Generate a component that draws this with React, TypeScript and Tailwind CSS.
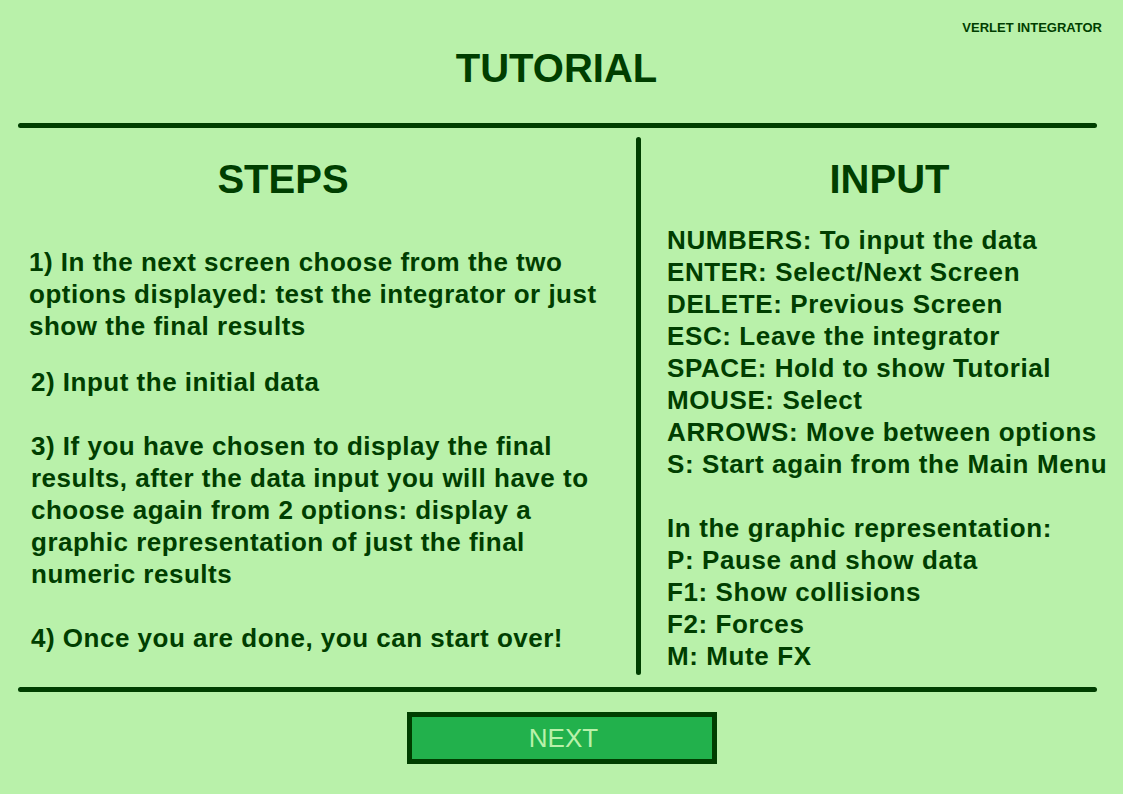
import React from 'react';

const steps: string[][] = [
  ['1) In the next screen choose from the two', 'options displayed: test the integrator or just', 'show the final results'],
  ['2) Input the initial data'],
  [
    '3) If you have chosen to display the final',
    'results, after the data input you will have to',
    'choose again from 2 options: display a',
    'graphic representation of just the final',
    'numeric results',
  ],
  ['4) Once you are done, you can start over!'],
];

const keys: string[] = [
  'NUMBERS: To input the data',
  'ENTER: Select/Next Screen',
  'DELETE: Previous Screen',
  'ESC: Leave the integrator',
  'SPACE: Hold to show Tutorial',
  'MOUSE: Select',
  'ARROWS: Move between options',
  'S: Start again from the Main Menu',
  '',
  'In the graphic representation:',
  'P: Pause and show data',
  'F1: Show collisions',
  'F2: Forces',
  'M: Mute FX',
];

const Rule = () => <div className="mx-[18px] mr-[26px] h-[5px] rounded-full bg-[#003e00]" />;

export default function App() {
  return (
    <div className="h-[794px] w-full overflow-hidden bg-[#b9f1aa] font-['Liberation_Sans',Arial,sans-serif] text-[#003e00]">
      <header>
        <div className="pr-[21px] pt-[21px] text-right text-[13px] font-bold leading-none">VERLET INTEGRATOR</div>
        <h1 className="mt-[14px] pr-[10px] text-center text-[40px] font-bold leading-none">TUTORIAL</h1>
      </header>

      <div className="mt-[35px]">
        <Rule />
      </div>

      <main className="flex h-[559px]">
        <section className="w-[618px] ml-[18px] pt-[31px]">
          <h2 className="pr-[88px] text-center text-[40px] font-bold leading-none">STEPS</h2>
          <div className="mt-[47px] pl-[11px] text-[26px] font-bold leading-[32px] tracking-[0.5px] whitespace-nowrap">
            {steps.map((para, i) => (
              <p key={i} className={i === 0 ? '' : i === 1 ? 'mt-[24px] pl-[2px]' : 'mt-[32px] pl-[2px]'}>
                {para.map((line) => (
                  <span key={line} className="block">
                    {line}
                  </span>
                ))}
              </p>
            ))}
          </div>
        </section>

        <div className="mt-[9px] mb-[12px] w-[5px] rounded-full bg-[#003e00]" />

        <section className="flex-1 pt-[31px]">
          <h2 className="pl-[15px] text-center text-[40px] font-bold leading-none">INPUT</h2>
          <ul className="mt-[25px] pl-[26px] text-[26px] font-bold leading-[32px] tracking-[0.6px] whitespace-nowrap">
            {keys.map((k, i) => (
              <li key={i} className="h-[32px]">
                {k}
              </li>
            ))}
          </ul>
        </section>
      </main>

      <Rule />

      <div className="mt-[20px] flex justify-center">
        <button className="flex h-[52px] w-[310px] items-center justify-center border-[5px] border-[#003e00] bg-[#22b14c] pl-[4px] text-[26px] leading-none text-[#b9f1aa]">
          NEXT
        </button>
      </div>
    </div>
  );
}
